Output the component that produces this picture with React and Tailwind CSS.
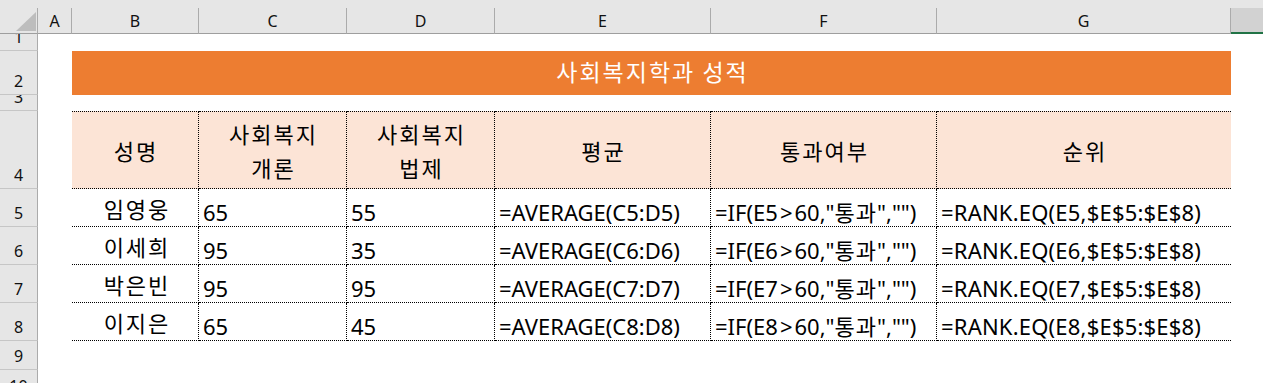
import React from "react";

const COLS = "grid grid-cols-[38px_34px_127px_148px_148px_216px_226px_294px_1fr]";
const LETTERS = ["A", "B", "C", "D", "E", "F", "G"];

const rows = [
  ["임영웅", "65", "55", "5"],
  ["이세희", "95", "35", "6"],
  ["박은빈", "95", "95", "7"],
  ["이지은", "65", "45", "8"],
];

function RowHead({ n }) {
  return (
    <div className="flex items-end justify-center overflow-hidden bg-[#e6e6e6] border-r border-r-[#ababab] border-b border-b-[#c6c6c6] pb-[5px]">
      <span className="text-[16px] leading-[16px] text-[#111]">{n}</span>
    </div>
  );
}

function Row({ n, h, children }) {
  return (
    <div className={`${COLS} ${h}`}>
      <RowHead n={n} />
      <div />
      {children}
    </div>
  );
}

const cellBase =
  "flex items-end overflow-hidden whitespace-nowrap border-b border-dotted border-black pl-[4px] pb-[3px] text-[22px] leading-[22px]";

export default function App() {
  return (
    <div className="w-[1263px] h-[383px] overflow-hidden bg-white font-['Noto_Sans','Noto_Sans_CJK_KR',sans-serif] text-black">
      {/* column header */}
      <div className="h-[34px] bg-[#e6e6e6] pt-[8px]">
        <div className={`${COLS} h-[26px]`}>
          <div className="relative border-r border-r-[#ababab] border-b border-b-[#9e9e9e]">
            <svg className="absolute left-[16px] top-[4px]" width="20" height="19" viewBox="0 0 20 19">
              <polygon points="20,0 20,19 0,19" fill="#bdbdbd" />
            </svg>
          </div>
          {LETTERS.map((l) => (
            <div
              key={l}
              className="flex items-center justify-center border-r border-r-[#ababab] border-b border-b-[#9e9e9e] text-[16px] text-[#111]"
            >
              {l}
            </div>
          ))}
          <div className="bg-[#d2d2d2] border-b-2 border-b-[#217346]" />
        </div>
      </div>

      {/* row 1 */}
      <Row n="1" h="h-[17px]" />

      {/* row 2 title */}
      <Row n="2" h="h-[44px]">
        <div className="col-span-6 flex items-center justify-center bg-[#ed7d31] pb-[4px] pl-[2px] font-['Noto_Sans_CJK_KR',sans-serif] text-[23px] leading-[30px] tracking-[2px] text-white">
          사회복지학과 성적
        </div>
      </Row>

      {/* row 3 */}
      <Row n="3" h="h-[16px]" />

      {/* row 4 headers */}
      <Row n="4" h="h-[78px]">
        {[["성명"], ["사회복지", "개론"], ["사회복지", "법제"], ["평균"], ["통과여부"], ["순위"]].map((lines, i) => (
          <div
            key={i}
            className={`flex flex-col items-center justify-center bg-[#fce4d6] border-t border-b border-dotted border-black ${i < 5 ? "border-r" : ""} pl-[2px] font-['Noto_Sans_CJK_KR',sans-serif] text-[22px] leading-[34px] tracking-[2px]`}
          >
            {lines.map((t) => (
              <span key={t}>{t}</span>
            ))}
          </div>
        ))}
      </Row>

      {/* data rows */}
      {rows.map((r) => (
        <Row key={r[3]} n={r[3]} h="h-[38px]">
          <div className="flex items-end justify-center border-b border-r border-dotted border-black pb-[7px] pl-[4px] font-['Noto_Sans_CJK_KR',sans-serif] text-[22px] leading-[22px] tracking-[2px]">
            {r[0]}
          </div>
          <div className={`${cellBase} border-r`}>{r[1]}</div>
          <div className={`${cellBase} border-r`}>{r[2]}</div>
          <div className={`${cellBase} border-r`}>
            {`=AVERAGE(C${r[3]}:D${r[3]})`}
          </div>
          <div className={`${cellBase} border-r`}>
            <span>
              {`=IF(E${r[3]}`}
              <span className="px-[2px]">&gt;</span>
              {`60,"`}
              <span className="tracking-[1px]">통과</span>
              {`","")`}
            </span>
          </div>
          <div className={`${cellBase} tracking-[0.2px]`}>
            {`=RANK.EQ(E${r[3]},$E$5:$E$8)`}
          </div>
        </Row>
      ))}

      {/* row 9 */}
      <Row n="9" h="h-[29px]" />
      {/* row 10 */}
      <Row n="10" h="h-[30px]" />
    </div>
  );
}
